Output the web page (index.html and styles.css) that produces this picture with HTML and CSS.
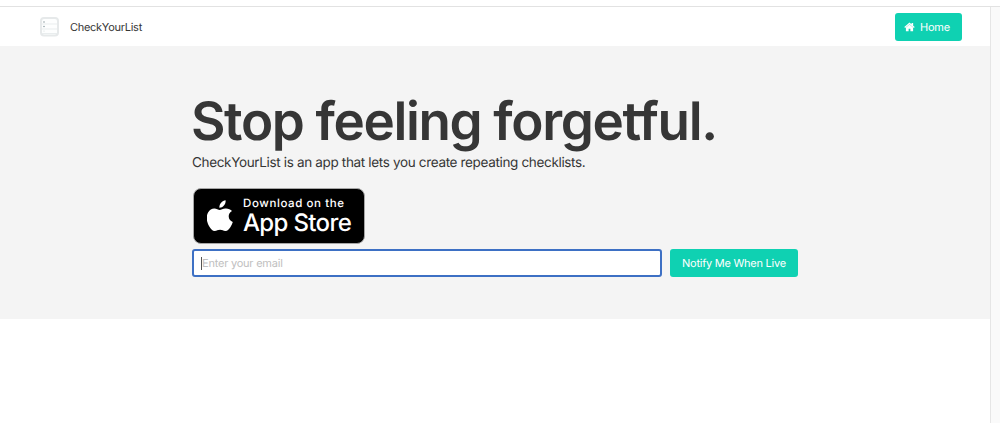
FILE: index.html
```html
<!DOCTYPE html>
<html lang="en">
<head>
<meta charset="utf-8">
<title>CheckYourList</title>
<link rel="stylesheet" href="styles.css">
</head>
<body>
<div class="topline"></div>
<div class="viewport">
  <div class="page">
    <nav class="navbar">
      <a class="brand">
        <svg class="brand-icon" width="20" height="20" viewBox="0 0 20 20">
          <rect x="2" y="1" width="17" height="17.500" rx="3" fill="#fdfefe" stroke="#e6e9ea" stroke-width="2"/>
          <path d="M3 7h15M3 12h15M3 16.500h15" stroke="#e9edee" stroke-width="1"/>
          <circle cx="5" cy="5" r=".8" fill="#8fa0a5"/>
          <circle cx="5" cy="9.500" r=".8" fill="#8fa0a5"/>
          <circle cx="5" cy="14" r=".6" fill="#d5dcde"/>
        </svg>
        <span class="brand-name">CheckYourList</span>
      </a>
      <a class="button home">
        <svg width="11" height="10" viewBox="0 0 22 20" fill="#fff">
          <path d="M11 1 0.600 10l1.600 1.800L11 4.300l8.800 7.500L21.400 10 18.300 7.300V2h-3.200v2.500z"/>
          <path d="M11 5 3.800 11.200V18.500h5.400v-5h3.600v5h5.400v-7.300z"/>
        </svg>
        <span class="home-label">Home</span>
      </a>
    </nav>
    <main class="hero">
      <h1 class="title">Stop feeling forgetful.</h1>
      <p class="subtitle">CheckYourList is an app that lets you create repeating checklists.</p>
      <a class="store">
        <svg class="apple" width="26" height="32" viewBox="0 0 26 32" fill="#fff">
          <path d="M18.600 0.200C18.900 2.200 18.100 4.200 16.900 5.600 15.700 7.100 14 7.900 12.400 7.800 12.200 5.900 13 4 14.100 2.700 15.300 1.300 17 0.400 18.600 0.200z"/>
          <path d="M25 10.900C22.900 12.200 21.700 13.900 21.700 16.300 21.700 19 23.300 21.100 25.800 22.100 25.300 23.800 24.500 25.400 23.500 26.900 22.100 29 20.700 31 18.500 31 16.300 31.100 15.600 29.800 13.100 29.800 10.600 29.800 9.800 31 7.700 31.100 5.600 31.200 4 28.900 2.600 26.900-.3 22.700-1.500 16.600 1.200 12.200 2.500 10 4.800 8.600 7.300 8.500 9.400 8.500 11.400 9.900 12.700 9.900 14 9.900 16.400 8.200 19 8.500 21.500 8.600 23.600 9.400 25 10.900z"/>
        </svg>
        <span class="store-text">
          <span class="store-small">Download on the</span>
          <span class="store-big">App Store</span>
        </span>
      </a>
      <div class="signup">
        <div class="field"><span class="caret"></span><span class="placeholder">Enter your email</span></div>
        <a class="button notify"><span class="notify-label">Notify Me When Live</span></a>
      </div>
    </main>
  </div>
  <div class="scrollbar"></div>
</div>
</body>
</html>
```
FILE: styles.css
```css
* { box-sizing: border-box; }
body {
  margin: 0;
  height: 423px;
  overflow: hidden;
  background: #fff;
  color: #363636;
  font-family: Inter, "Liberation Sans", sans-serif;
  text-rendering: geometricPrecision;
  display: flex;
  flex-direction: column;
}
.topline { height: 7px; border-bottom: 1px solid #e2e2e2; flex: none; }
.viewport { flex: 1; display: flex; }
.page { flex: 1; }
.scrollbar { width: 10px; background: #fafafa; border-left: 1px solid #e6e6e6; }
.navbar {
  height: 39px;
  padding: 0 28px 0 39px;
  display: flex;
  align-items: center;
  justify-content: space-between;
}
.brand { display: flex; align-items: center; gap: 11px; }
.brand-icon { display: block; }
.brand-name { font-size: 11px; letter-spacing: -.28px; white-space: nowrap; }
.button {
  height: 28px;
  border-radius: 3px;
  background: #0fd1b2;
  color: #fff;
  display: flex;
  align-items: center;
  white-space: nowrap;
}
.home { width: 67px; padding-left: 9px; gap: 5px; }
.home-label { font-size: 11px; letter-spacing: -.2px; }
.hero { height: 273px; background: #f4f4f4; padding: 43px 191px; }
.title {
  margin: 0;
  height: 64px;
  line-height: 64px;
  font-size: 53px;
  font-weight: 600;
  letter-spacing: -1.36px;
  white-space: nowrap;
}
.subtitle {
  margin: 0 0 0 1px;
  height: 20px;
  line-height: 20px;
  font-size: 13.500px;
  letter-spacing: -.34px;
  white-space: nowrap;
}
.store {
  margin: 15px 0 0 2px;
  width: 172px;
  height: 56px;
  padding-left: 13px;
  border: 1px solid #a6a6a6;
  border-radius: 8px;
  background: #000;
  color: #fff;
  display: flex;
  align-items: center;
  gap: 10px;
}
.store-text { display: flex; flex-direction: column; white-space: nowrap; padding-bottom: 1px; }
.store-small { font-size: 11.500px; line-height: 15px; font-weight: 500; letter-spacing: .6px; }
.store-big { font-size: 24px; line-height: 24px; font-weight: 500; letter-spacing: -.65px; }
.signup { display: flex; gap: 8px; margin: 5px 0 0 1px; }
.field {
  width: 470px;
  height: 28px;
  border: 2px solid #3d70c4;
  border-radius: 3px;
  background: #fff;
  padding-left: 7px;
  display: flex;
  align-items: center;
}
.caret { width: 1px; height: 13px; background: #555; }
.placeholder { font-size: 11px; letter-spacing: -.22px; color: #c0c0c0; white-space: nowrap; }
.notify { width: 128px; padding-left: 12px; }
.notify-label { font-size: 11px; letter-spacing: -.25px; }
```
